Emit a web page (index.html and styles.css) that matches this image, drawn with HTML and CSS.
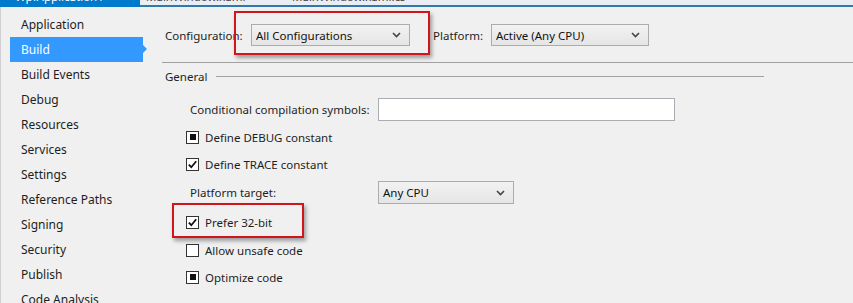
FILE: index.html
```html
<!DOCTYPE html>
<html lang="en">
<head>
    <meta charset="UTF-8">
    <title>WpfApplication1 - Build</title>
    <link rel="stylesheet" href="styles.css">
</head>
<body>
    <div class="tabstrip">
        <div class="doc-tab active"><span>WpfApplication1</span></div>
        <div class="doc-tabs">
            <div class="doc-tab"><span>MainWindow.xaml</span></div>
            <div class="doc-tab"><span>MainWindow.xaml.cs</span></div>
        </div>
    </div>

    <div class="window">
        <ul class="sidebar">
            <li>Application</li>
            <li class="selected">Build</li>
            <li>Build Events</li>
            <li>Debug</li>
            <li>Resources</li>
            <li>Services</li>
            <li>Settings</li>
            <li>Reference Paths</li>
            <li>Signing</li>
            <li>Security</li>
            <li>Publish</li>
            <li>Code Analysis</li>
        </ul>

        <div class="page">
            <div class="config-row">
                <span class="config-label">Configuration:</span>
                <div class="highlight config-highlight">
                    <div class="combo combo-config">
                        <span>All Configurations</span>
                        <svg class="chevron" width="9" height="6" viewBox="0 0 9 6"><path d="M1 1 L4.5 4.5 L8 1" fill="none" stroke="#444" stroke-width="1.6"/></svg>
                    </div>
                </div>
                <span class="platform-label">Platform:</span>
                <div class="combo combo-platform">
                    <span>Active (Any CPU)</span>
                    <svg class="chevron" width="9" height="6" viewBox="0 0 9 6"><path d="M1 1 L4.5 4.5 L8 1" fill="none" stroke="#444" stroke-width="1.6"/></svg>
                </div>
            </div>

            <div class="section-title">
                <span>General</span>
                <div class="rule"></div>
            </div>

            <div class="field-row row-symbols">
                <span class="field-label">Conditional compilation symbols:</span>
                <div class="textbox"></div>
            </div>

            <div class="check-row row-debug">
                <span class="checkbox mixed"></span>
                <span>Define DEBUG constant</span>
            </div>
            <div class="check-row row-trace">
                <span class="checkbox checked">
                    <svg width="11" height="11" viewBox="0 0 11 11"><path d="M1.8 5.6 L4.3 8.2 L9.2 2.2" fill="none" stroke="#111" stroke-width="1.8"/></svg>
                </span>
                <span>Define TRACE constant</span>
            </div>

            <div class="field-row row-platform">
                <span class="field-label">Platform target:</span>
                <div class="combo combo-target">
                    <span>Any CPU</span>
                    <svg class="chevron" width="9" height="6" viewBox="0 0 9 6"><path d="M1 1 L4.5 4.5 L8 1" fill="none" stroke="#444" stroke-width="1.6"/></svg>
                </div>
            </div>

            <div class="check-row row-prefer highlight prefer-highlight">
                <span class="checkbox checked">
                    <svg width="11" height="11" viewBox="0 0 11 11"><path d="M1.8 5.6 L4.3 8.2 L9.2 2.2" fill="none" stroke="#111" stroke-width="1.8"/></svg>
                </span>
                <span>Prefer 32-bit</span>
            </div>
            <div class="check-row row-unsafe">
                <span class="checkbox"></span>
                <span>Allow unsafe code</span>
            </div>
            <div class="check-row row-optimize">
                <span class="checkbox mixed"></span>
                <span>Optimize code</span>
            </div>
        </div>
    </div>
</body>
</html>
```

FILE: styles.css
```css
body {
    margin: 0;
    background-color: #f0f0f0;
    font-family: 'Noto Sans', 'Open Sans', Arial, sans-serif;
    font-size: 11.5px;
    color: #1e1e1e;
    overflow: hidden;
    height: 303px;
}

/* document tabs, mostly scrolled off the top */
.tabstrip {
    display: flex;
    height: 7px;
}
.doc-tab {
    height: 5px;
    overflow: hidden;
    white-space: nowrap;
    line-height: 14px;
}
.doc-tab span {
    display: block;
    margin-top: -10px;
}
.doc-tab.active {
    width: 140px;
    height: 7px;
    background: #007acc;
    color: #fff;
    padding-left: 15px;
    box-sizing: border-box;
}
.doc-tabs {
    flex: 1;
    display: flex;
    background: #eaeef4;
    border-bottom: 2px solid #2f79ac;
    height: 5px;
    color: #444;
}
.doc-tabs .doc-tab {
    padding-left: 6px;
    width: 140px;
}

.window {
    display: flex;
}

/* left navigation */
.sidebar {
    list-style: none;
    margin: 0;
    padding: 5px 0 0 0;
    width: 150px;
    flex-shrink: 0;
    border-left: 1px solid #cfcfcf;
    box-sizing: border-box;
    font-size: 12px;
}
.sidebar li {
    height: 25px;
    line-height: 26px;
    padding-left: 20px;
    margin-right: 7px;
    white-space: nowrap;
}
.sidebar li.selected {
    background: #3399ff;
    color: #fff;
    margin-left: 9px;
    padding-left: 11px;
    position: relative;
}
.sidebar li.selected::after {
    content: "";
    position: absolute;
    right: -4px;
    top: 8px;
    border-left: 4px solid #3399ff;
    border-top: 4px solid transparent;
    border-bottom: 4px solid transparent;
}

/* main property page */
.page {
    flex: 1;
    padding-left: 12px;
}

.config-row {
    display: flex;
    align-items: center;
    margin-top: 17px;
    padding-left: 3px;
    padding-bottom: 16px;
    border-bottom: 1px solid #a0a0a0;
}
.config-label {
    width: 86px;
}
.platform-label {
    margin-left: 23px;
    width: 58px;
}

.combo {
    display: flex;
    align-items: center;
    justify-content: space-between;
    height: 22px;
    box-sizing: border-box;
    border: 1px solid #acacac;
    background: linear-gradient(#f2f2f2, #e5e5e5);
    padding: 0 8px 0 4px;
    color: #111;
}
.combo-config {
    width: 159px;
}
.combo-platform {
    width: 158px;
}
.combo-target {
    width: 136px;
    height: 23px;
}
.chevron {
    flex-shrink: 0;
}

/* red call-out boxes drawn over the screenshot */
.highlight {
    position: relative;
}
.highlight::after {
    content: "";
    position: absolute;
    border: 2px solid #d2141c;
    box-shadow: 2px 3px 4px rgba(0,0,0,0.35);
    pointer-events: none;
}
.config-highlight::after {
    left: -17px;
    right: -20px;
    top: -13px;
    bottom: -9px;
}
.prefer-highlight::after {
    left: 10px;
    width: 128px;
    top: -8px;
    bottom: -5px;
}

.section-title {
    display: flex;
    align-items: center;
    height: 16px;
    margin-top: 5px;
    padding-left: 3px;
}
.section-title .rule {
    width: 548px;
    margin-left: 9px;
    border-top: 1px solid #a0a0a0;
    margin-top: 1px;
}

.field-row {
    display: flex;
    align-items: center;
    padding-left: 28px;
}
.field-label {
    width: 188px;
}
.row-symbols {
    margin-top: 14px;
}
.textbox {
    width: 297px;
    height: 23px;
    box-sizing: border-box;
    background: #fff;
    border: 1px solid #abadb3;
}

.check-row {
    display: flex;
    align-items: center;
    height: 22px;
    padding-left: 24px;
    width: fit-content;
}
.checkbox {
    width: 13px;
    height: 13px;
    box-sizing: border-box;
    border: 1px solid #333;
    background: #fff;
    margin-right: 6px;
    display: flex;
    align-items: center;
    justify-content: center;
}
.checkbox.mixed::before {
    content: "";
    width: 6px;
    height: 6px;
    background: #111;
}
.row-debug { margin-top: 5px; }
.row-trace { margin-top: 5px; }
.row-platform { margin-top: 6px; }
.row-prefer { margin-top: 7px; }
.row-unsafe { margin-top: 6px; }
.row-optimize { margin-top: 5px; }
```
